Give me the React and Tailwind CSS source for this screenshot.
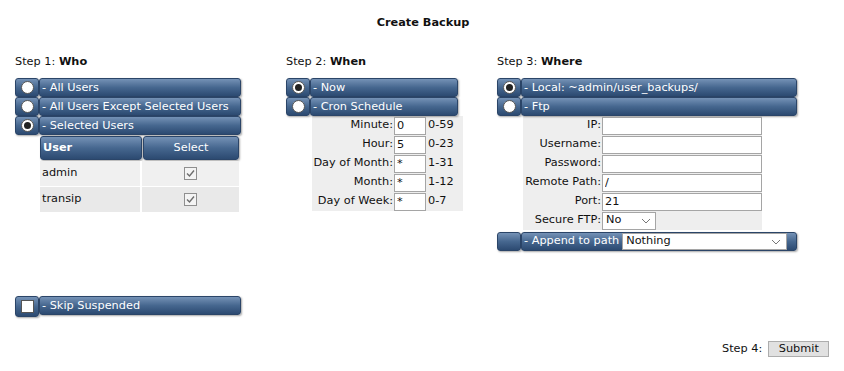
import React from "react";

const F = { fontFamily: '"DejaVu Sans", Verdana, sans-serif' };
const barCls =
  "bg-linear-to-b from-[#7592b6] via-[#46678f] to-[#2c4a71] border border-[#2b4568] rounded-[3px] shadow-[1px_1px_2px_rgba(0,0,0,0.35)] text-white";

function Radio({ on }) {
  return (
    <div className={`${barCls} w-[24px] h-[19px] flex items-center justify-center shrink-0`}>
      <div className="w-[13px] h-[13px] rounded-full bg-white border border-[#555] flex items-center justify-center">
        {on && <div className="w-[7px] h-[7px] rounded-full bg-[#222]" />}
      </div>
    </div>
  );
}

function Row({ on, label, width, children, box }) {
  return (
    <div className="flex h-[19px]">
      {box ? box : <Radio on={on} />}
      <div
        className={`${barCls} h-[19px] flex items-center pl-[2px] leading-none`}
        style={{ width }}
      >
        <span>- {label}</span>
        {children}
      </div>
    </div>
  );
}

function Check() {
  return (
    <div className="w-[13px] h-[13px] border border-[#8f8f8f] bg-[#f4f4f4] flex items-center justify-center">
      <svg width="11" height="11" viewBox="0 0 11 11">
        <path d="M2 5.5 L4.5 8 L9 2.5" stroke="#6d6d6d" strokeWidth="1.4" fill="none" />
      </svg>
    </div>
  );
}

function Chevron() {
  return (
    <svg width="10" height="6" viewBox="0 0 10 6">
      <path d="M1 1 L5 5 L9 1" stroke="#777" strokeWidth="1" fill="none" />
    </svg>
  );
}

export default function App() {
  const cron = [
    ["Minute:", "0", "0-59"],
    ["Hour:", "5", "0-23"],
    ["Day of Month:", "*", "1-31"],
    ["Month:", "*", "1-12"],
    ["Day of Week:", "*", "0-7"],
  ];
  const ftp = [
    ["IP:", ""],
    ["Username:", ""],
    ["Password:", ""],
    ["Remote Path:", "/"],
    ["Port:", "21"],
  ];
  return (
    <div className="w-[844px] h-[371px] bg-white text-[#111] text-[11.3px] relative" style={F}>
      <div className="text-center font-bold pt-[15px] h-[40px] pl-[2px]">Create Backup</div>
      <div className="flex pl-[15px]">
        {/* Column 1 */}
        <div className="w-[271px] shrink-0">
          <div className="h-[38px] pt-[14px]">
            Step 1: <b>Who</b>
          </div>
          <div className="flex flex-col">
            <Row on={false} label="All Users" width={202} />
            <Row on={false} label="All Users Except Selected Users" width={202} />
            <Row on={true} label="Selected Users" width={202} />
          </div>
          <div className="ml-[25px] mt-[1px] w-[199px]">
            <div className="flex h-[24px] gap-[1px]">
              <div className={`${barCls} w-[102px] flex items-center pl-[2px] font-bold`}>User</div>
              <div className={`${barCls} w-[96px] flex items-center justify-center`}>Select</div>
            </div>
            {["admin", "transip"].map((u, i) => (
              <div key={u} className="flex h-[26px] border-t border-white">
                <div className={`${i === 0 ? "bg-[#f0f0f0]" : "bg-[#e9e9e9]"} w-[102px] flex items-center pl-[2px] border-r-2 border-white`}>
                  {u}
                </div>
                <div className={`${i === 0 ? "bg-[#f0f0f0]" : "bg-[#e9e9e9]"} flex-1 flex items-center justify-center`}>
                  <Check />
                </div>
              </div>
            ))}
          </div>
          <div className="mt-[84px]">
            <Row
              label="Skip Suspended"
              width={202}
              box={
                <div className={`${barCls} w-[24px] h-[21px] flex items-center justify-center shrink-0`}>
                  <div className="w-[13px] h-[13px] bg-white border border-[#555]" />
                </div>
              }
            />
          </div>
        </div>

        {/* Column 2 */}
        <div className="w-[211px] shrink-0">
          <div className="h-[38px] pt-[14px]">
            Step 2: <b>When</b>
          </div>
          <Row on={true} label="Now" width={148} />
          <Row on={false} label="Cron Schedule" width={148} />
          <div className="ml-[26px] w-[151px]">
            {cron.map(([l, v, r]) => (
              <div key={l} className="flex h-[19px] items-center bg-[#eeeeee]">
                <div className="w-[82px] text-right pr-[1px] whitespace-nowrap">{l}</div>
                <input
                  readOnly
                  value={v}
                  className="w-[32px] h-[18px] border border-[#a5a5a5] bg-white px-[2px] text-[11.3px] outline-none"
                  style={F}
                />
                <div className="pl-[2px]">{r}</div>
              </div>
            ))}
          </div>
        </div>

        {/* Column 3 */}
        <div className="w-[310px] shrink-0">
          <div className="h-[38px] pt-[14px]">
            Step 3: <b>Where</b>
          </div>
          <Row on={true} label="Local: ~admin/user_backups/" width={276} />
          <Row on={false} label="Ftp" width={276} />
          <div className="ml-[26px] w-[239px]">
            {ftp.map(([l, v]) => (
              <div key={l} className="flex h-[19px] items-center bg-[#eeeeee]">
                <div className="w-[79px] text-right pr-[1px] whitespace-nowrap">{l}</div>
                <input
                  readOnly
                  value={v}
                  className="w-[160px] h-[18px] border border-[#a5a5a5] bg-white px-[2px] text-[11.3px] outline-none"
                  style={F}
                />
              </div>
            ))}
            <div className="flex h-[19px] items-center bg-[#eeeeee]">
              <div className="w-[79px] text-right pr-[1px] whitespace-nowrap">Secure FTP:</div>
              <div className="w-[54px] h-[18px] border border-[#a5a5a5] bg-white flex items-center justify-between pl-[3px] pr-[4px]">
                <span>No</span>
                <Chevron />
              </div>
            </div>
          </div>
          <div className="mt-[2px] flex h-[19px]">
            <div className={`${barCls} w-[24px] h-[19px] shrink-0`} />
            <div className={`${barCls} w-[276px] h-[19px] flex items-center pl-[2px]`}>
              <span className="whitespace-nowrap">- Append to path</span>
              <div className="ml-[3px] w-[165px] h-[17px] bg-white border border-[#a5a5a5] text-[#111] flex items-center justify-between pl-[3px] pr-[5px]">
                <span>Nothing</span>
                <Chevron />
              </div>
            </div>
          </div>
        </div>
      </div>

      <div className="absolute left-[722px] top-[341px] flex items-center gap-[6px]">
        <span>Step 4:</span>
        <div className="w-[61px] h-[16px] bg-[#e1e1e1] border border-[#adadad] flex items-center justify-center">
          Submit
        </div>
      </div>
    </div>
  );
}
